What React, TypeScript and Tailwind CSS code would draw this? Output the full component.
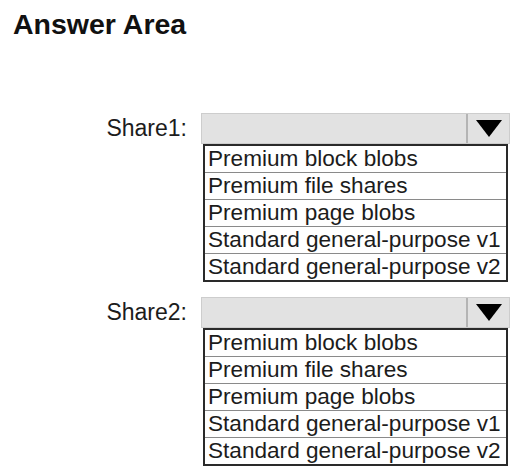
const options = [
  "Premium block blobs",
  "Premium file shares",
  "Premium page blobs",
  "Standard general-purpose v1",
  "Standard general-purpose v2",
];

const ShareSelect = ({ label }: { label: string }) => {
  return (
    <div className="flex items-start">
      <div className="w-[201px] h-[31px] flex items-center justify-end pr-[14px] text-[23px] text-[#1c1c1c]">
        {label}
      </div>
      <div className="w-[309px] flex flex-col">
        {/* closed dropdown */}
        <div className="h-[31px] flex bg-[#e2e2e2] border border-[#cdcdcd]">
          <div className="flex-1" />
          <div className="w-[43px] border-l-2 border-[#b4b4b4] flex items-center justify-center">
            <svg width="26" height="17" viewBox="0 0 26 17">
              <polygon points="0,0 26,0 13,17" fill="#000" />
            </svg>
          </div>
        </div>
        {/* options list */}
        <div className="ml-[2px] w-[305px] border-2 border-[#2a2a2a] bg-white">
          {options.map((opt, i) => (
            <div
              key={opt}
              className={`h-[26px] pl-[3px] flex items-center text-[22.6px] leading-[26px] text-[#1c1c1c] whitespace-nowrap ${
                i < options.length - 1 ? "border-b border-[#8a8a8a] h-[27px]" : ""
              }`}
            >
              {opt}
            </div>
          ))}
        </div>
      </div>
    </div>
  );
};

export default function App() {
  return (
    <div className="w-[524px] h-[476px] bg-white font-['Liberation_Sans',Arial,sans-serif]">
      <h1 className="pl-[13px] pt-[10px] text-[28.5px] leading-none font-bold text-[#111]">Answer Area</h1>
      <div className="mt-[74px] flex flex-col gap-[15px]">
        <ShareSelect label="Share1:" />
        <ShareSelect label="Share2:" />
      </div>
    </div>
  );
}
